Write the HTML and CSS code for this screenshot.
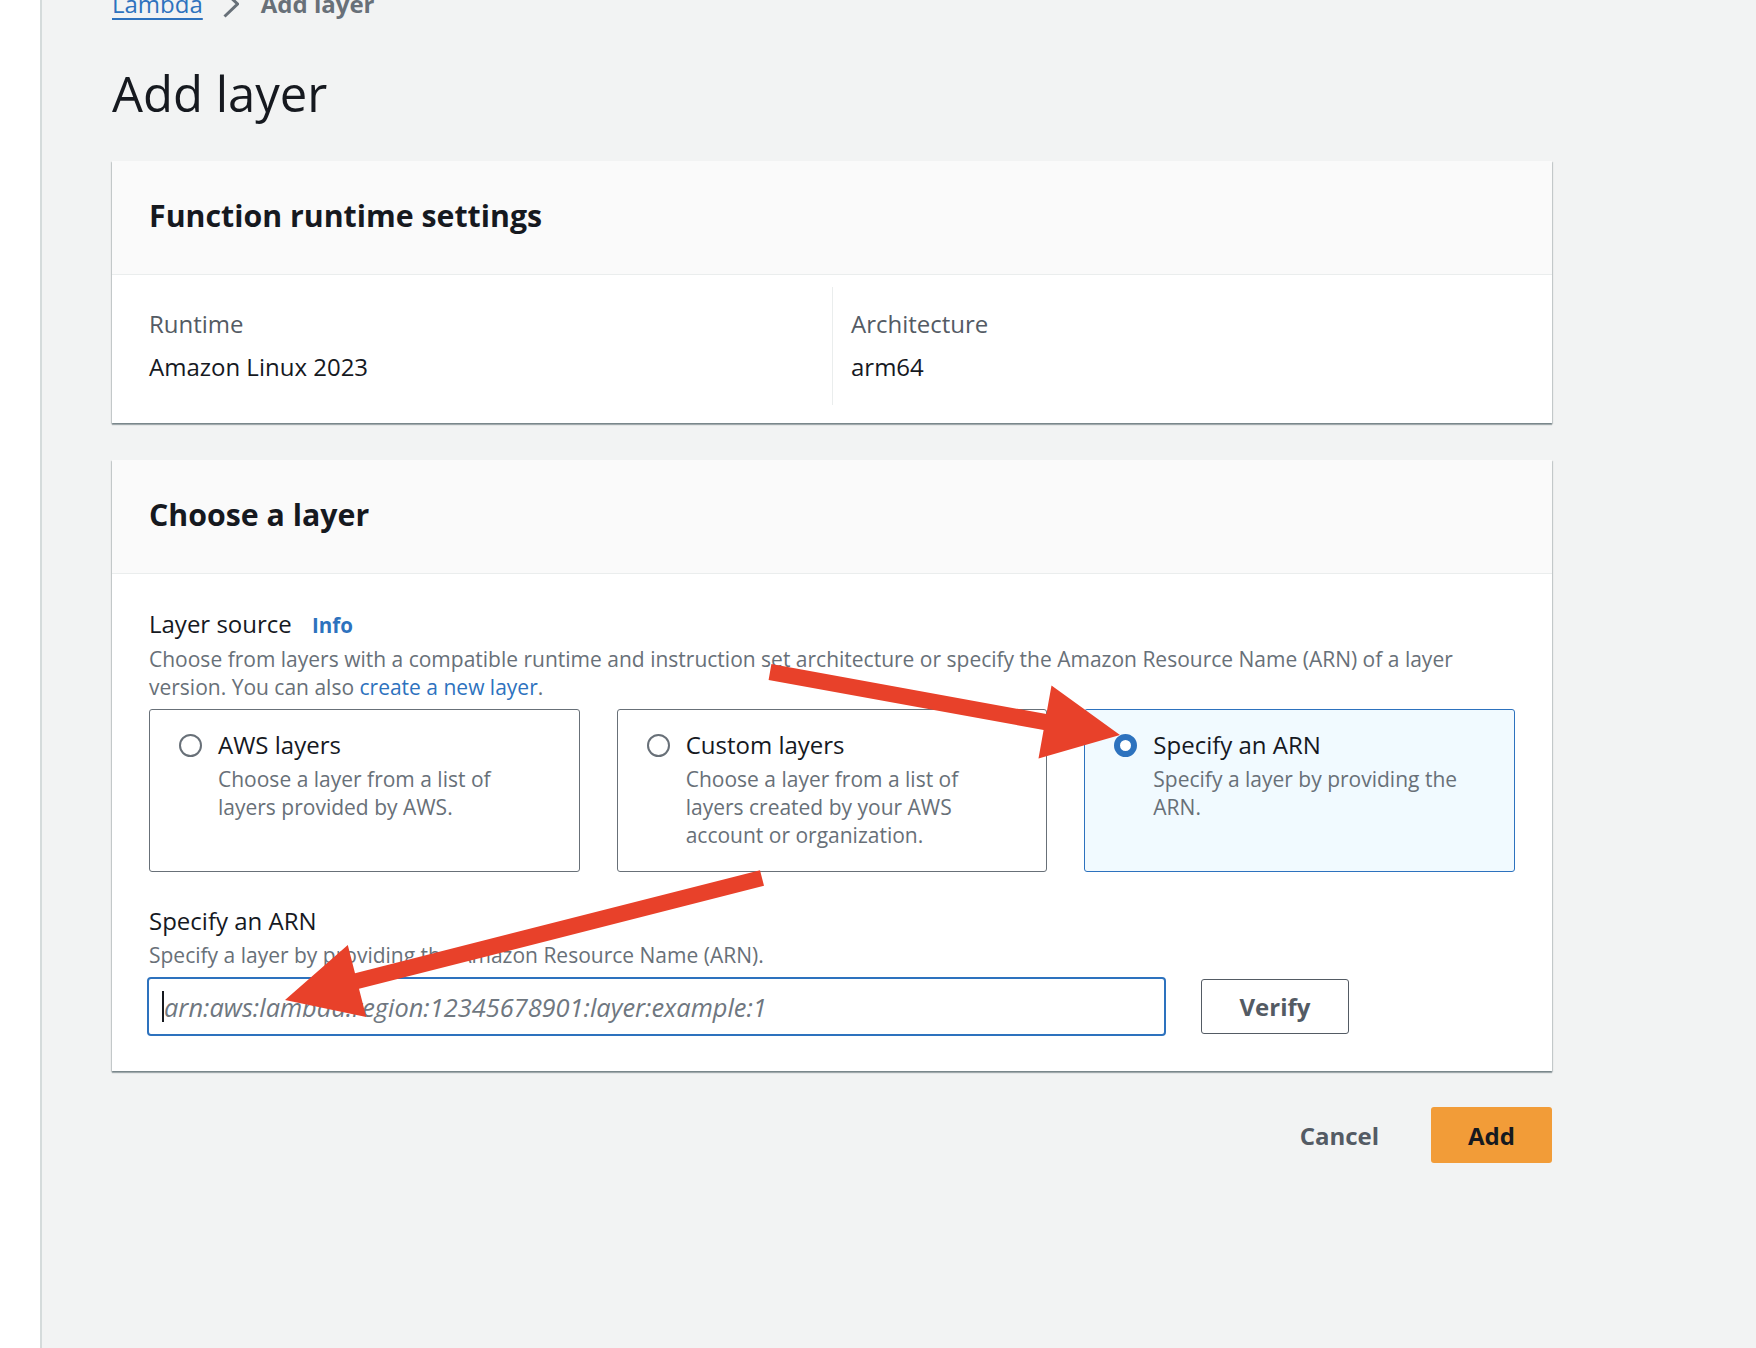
FILE: index.html
```html
<!DOCTYPE html>
<html lang="en">
<head>
<meta charset="utf-8">
<title>Add layer</title>
<link rel="stylesheet" href="styles.css">
</head>
<body>
<div class="app">
  <aside class="sidenav"></aside>
  <main class="content">
    <nav class="breadcrumbs">
      <a class="crumb-link" href="#">Lambda</a>
      <svg class="crumb-sep" width="16" height="28" viewBox="0 0 16 28"><path d="M1.5 1.5 L14.5 14 L1.5 26.5" fill="none" stroke="#687078" stroke-width="3"/></svg>
      <span class="crumb-current">Add layer</span>
    </nav>
    <h1 class="page-title">Add layer</h1>

    <section class="panel">
      <header class="panel-header"><h2>Function runtime settings</h2></header>
      <div class="panel-body kv-body">
        <div class="kv-grid">
          <div class="kv-col">
            <div class="kv-label">Runtime</div>
            <div class="kv-value">Amazon Linux 2023</div>
          </div>
          <div class="kv-col kv-col-split">
            <div class="kv-label">Architecture</div>
            <div class="kv-value">arm64</div>
          </div>
        </div>
      </div>
    </section>

    <section class="panel panel-gap">
      <header class="panel-header"><h2>Choose a layer</h2></header>
      <div class="panel-body form-body">
        <div class="field">
          <div class="field-label">Layer source <a class="info-link" href="#">Info</a></div>
          <div class="field-desc">Choose from layers with a compatible runtime and instruction set architecture or specify the Amazon Resource Name (ARN) of a layer version. You can also <a class="text-link" href="#">create a new layer</a>.</div>
        </div>
        <div class="tiles">
          <div class="tile">
            <span class="radio-wrap"><span class="radio"></span></span>
            <div class="tile-text">
              <div class="tile-title">AWS layers</div>
              <div class="tile-desc">Choose a layer from a list of layers provided by AWS.</div>
            </div>
          </div>
          <div class="tile">
            <span class="radio-wrap"><span class="radio"></span></span>
            <div class="tile-text">
              <div class="tile-title">Custom layers</div>
              <div class="tile-desc">Choose a layer from a list of layers created by your AWS account or organization.</div>
            </div>
          </div>
          <div class="tile tile-selected">
            <span class="radio-wrap"><span class="radio radio-checked"></span></span>
            <div class="tile-text">
              <div class="tile-title">Specify an ARN</div>
              <div class="tile-desc">Specify a layer by providing the ARN.</div>
            </div>
          </div>
        </div>
        <div class="field field-arn">
          <div class="field-label">Specify an ARN</div>
          <div class="field-desc">Specify a layer by providing the Amazon Resource Name (ARN).</div>
          <div class="arn-row">
            <div class="input-wrap">
              <input class="arn-input" type="text" placeholder="arn:aws:lambda:region:12345678901:layer:example:1">
              <span class="caret"></span>
            </div>
            <button class="btn-normal" type="button">Verify</button>
          </div>
        </div>
      </div>
    </section>

    <div class="actions">
      <button class="btn-link" type="button">Cancel</button>
      <button class="btn-primary" type="button">Add</button>
    </div>
  </main>
</div>

<svg class="annotations" width="1756" height="1348" viewBox="0 0 1756 1348">
  <polygon fill="#e8412a" points="771.4,664.1 1046.4,714.1 1051.5,685.6 1120,735 1038.5,758.4 1043.6,729.9 768.6,679.9"/>
  <polygon fill="#e8412a" points="760,870.2 355,973.2 347.8,945.1 285,1000 366.2,1016.9 359,988.8 764,885.8"/>
</svg>
</body>
</html>
```

FILE: styles.css
```css
* {
  box-sizing: border-box;
}

html,
body {
  margin: 0;
  padding: 0;
}

body {
  background: #f2f3f3;
  font-family: "Open Sans", "Noto Sans", "DejaVu Sans", sans-serif;
  color: #16191f;
  font-size: 24px;
  line-height: 34px;
  overflow: hidden;
}

.app {
  display: flex;
  min-height: 100vh;
}

.sidenav {
  width: 42px;
  flex: none;
  background: #ffffff;
  border-right: 2px solid #d5dbdb;
}

.content {
  padding-left: 70px;
  width: 1510px;
  flex: none;
}

/* Breadcrumbs */
.breadcrumbs {
  display: flex;
  align-items: center;
  height: 34px;
  margin-top: -13px;
}

.crumb-link {
  color: #2d72be;
  text-decoration: underline;
  text-decoration-thickness: 2px;
  text-underline-offset: 5px;
}

.crumb-sep {
  display: block;
  margin: 0 22px 0 20px;
}

.crumb-current {
  color: #687078;
  font-weight: 700;
}

.page-title {
  margin: 44px 0 40px;
  font-size: 49px;
  line-height: 56px;
  font-weight: 400;
  color: #16191f;
}

/* Panels */
.panel {
  background: #ffffff;
  box-shadow: 0 2px 1px 0 rgba(0, 28, 36, 0.3), 1px 1px 1px 0 rgba(0, 28, 36, 0.15), -1px 1px 1px 0 rgba(0, 28, 36, 0.15);
}

.panel-gap {
  margin-top: 37px;
}

.panel-header {
  background: #fafafa;
  padding: 37px 37px 40px;
  border-bottom: 1px solid #eaeded;
}

.panel-header h2 {
  margin: 0;
  font-size: 30.3px;
  line-height: 36px;
  font-weight: 700;
  color: #16191f;
}

.kv-body {
  padding: 12px 37px 18px;
}

.kv-grid {
  display: grid;
  grid-template-columns: 1fr 1fr;
}

.kv-col {
  padding: 20px 0 21px;
}

.kv-col-split {
  border-left: 1px solid #eaeded;
  padding-left: 18px;
}

.kv-label {
  color: #545b64;
  margin-bottom: 9px;
}

.kv-value {
  color: #16191f;
}

/* Form */
.form-body {
  padding: 33px 37px 35px;
}

.field-label {
  color: #16191f;
}

.info-link {
  color: #2d72be;
  font-weight: 700;
  font-size: 20.5px;
  text-decoration: none;
  margin-left: 14px;
}

.field-desc {
  margin-top: 3px;
  font-size: 21px;
  line-height: 28px;
  color: #687078;
}

.text-link {
  color: #2d72be;
  text-decoration: none;
}

.tiles {
  margin-top: 8px;
  display: grid;
  grid-template-columns: repeat(3, 1fr);
  gap: 37px;
}

.tile {
  display: flex;
  align-items: flex-start;
  border: 1px solid #687078;
  border-radius: 3px;
  padding: 18px 30px 22px 29px;
  background: #ffffff;
}

.tile-selected {
  background: #f1faff;
  border-color: #2d72be;
}

.radio-wrap {
  display: flex;
  align-items: center;
  height: 34px;
  flex: none;
}

.radio {
  display: block;
  width: 23px;
  height: 23px;
  border: 2px solid #687078;
  border-radius: 50%;
  background: #ffffff;
}

.radio-checked {
  border: 6px solid #2d72be;
}

.tile-text {
  margin-left: 16px;
  min-width: 0;
}

.tile-title {
  color: #16191f;
}

.tile-desc {
  margin-top: 3px;
  font-size: 21px;
  line-height: 28px;
  color: #687078;
}

.field-arn {
  margin-top: 32px;
}

.arn-row {
  display: flex;
  align-items: center;
  gap: 35px;
  margin-top: 8px;
}

.input-wrap {
  position: relative;
  width: 1019px;
  margin-left: -2px;
  flex: none;
}

.arn-input {
  display: block;
  width: 100%;
  height: 59px;
  border: 2px solid #2d72be;
  border-radius: 4px;
  padding: 0 15px;
  font-family: "Open Sans", "Noto Sans", sans-serif;
  font-size: 25.4px;
  color: #16191f;
  background: #ffffff;
  outline: none;
}

.arn-input::placeholder {
  color: #6f7780;
  font-style: italic;
  opacity: 1;
}

.caret {
  position: absolute;
  left: 15px;
  top: 14px;
  width: 2px;
  height: 31px;
  background: #16191f;
}

.btn-normal {
  width: 148px;
  height: 55px;
  border: 1px solid #545b64;
  border-radius: 3px;
  background: #ffffff;
  font-family: inherit;
  font-size: 24px;
  font-weight: 700;
  color: #545b64;
  padding: 0;
}

/* Actions */
.actions {
  display: flex;
  justify-content: flex-end;
  align-items: center;
  gap: 18px;
  margin-top: 36px;
}

.btn-link,
.btn-primary {
  height: 56px;
  font-family: inherit;
  font-size: 24px;
  font-weight: 700;
  border-radius: 3px;
}

.btn-link {
  background: transparent;
  border: none;
  padding: 0 34px;
  color: #545b64;
}

.btn-primary {
  background: #f29c38;
  border: none;
  padding: 0 37px;
  color: #16191f;
}

/* Annotation overlay */
.annotations {
  position: absolute;
  left: 0;
  top: 0;
  pointer-events: none;
}
```
